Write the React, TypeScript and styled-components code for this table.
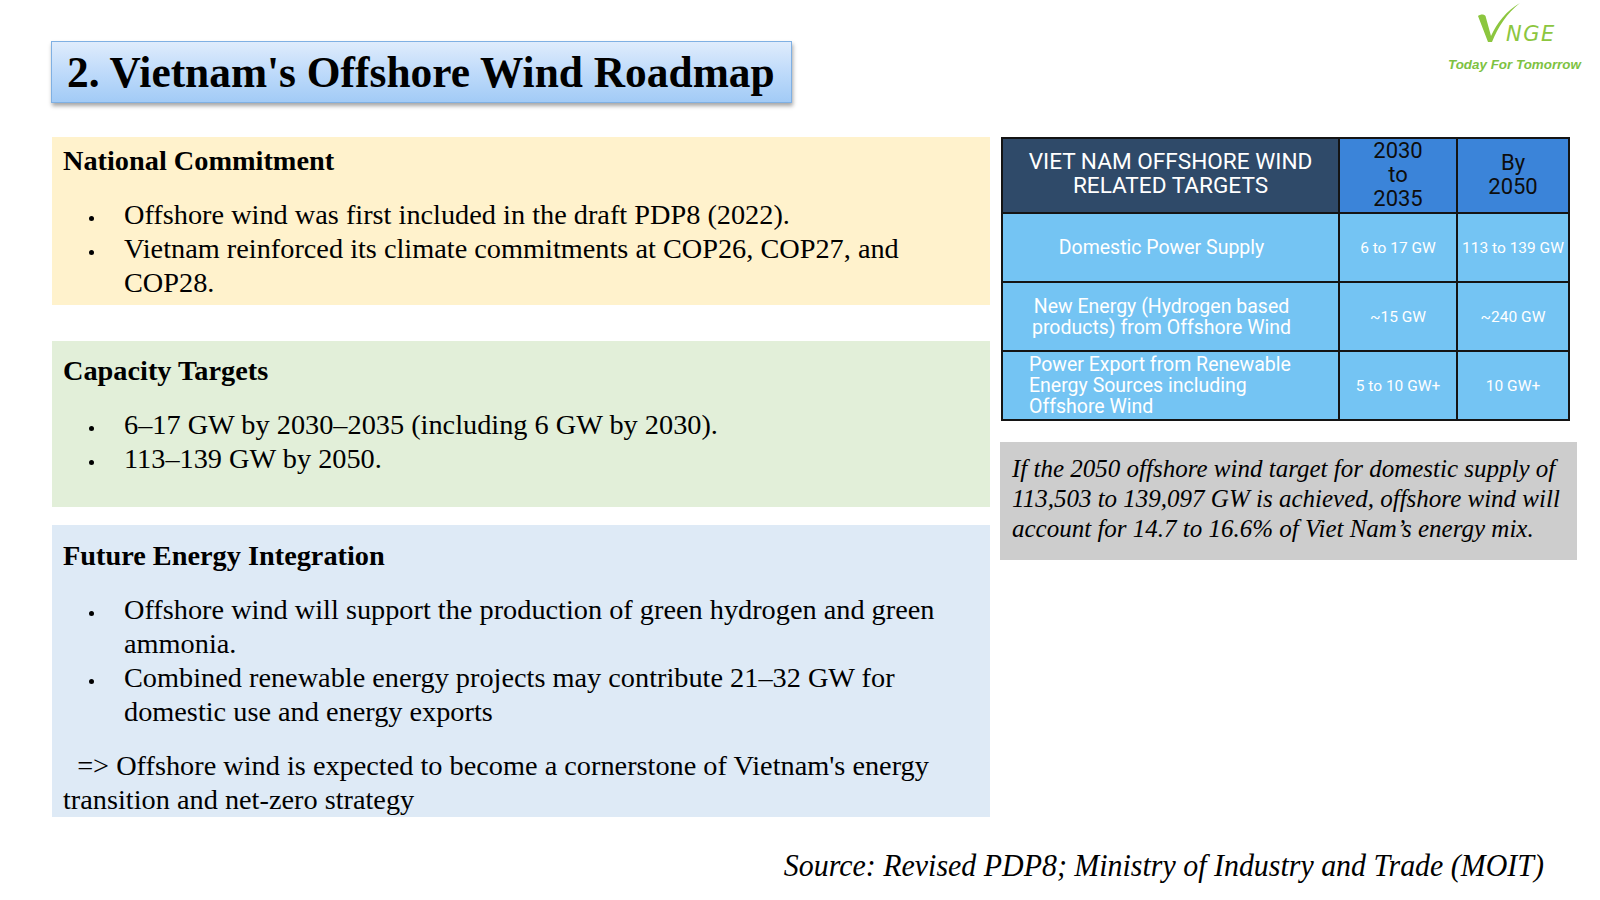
import React from "react";
import styled, {createGlobalStyle} from "styled-components";

const GlobalStyle = createGlobalStyle`
  html, body {
    margin: 0;
    padding: 0;
    background: #ffffff;
  }
  body {
    font-family: "Liberation Serif", "Times New Roman", serif;
    color: #000;
  }
`

type Section = {
	title: string
	bg: string
	height: number
	headPad: number
	gapTop: number
	items: string[]
	note?: string
}

const sections: Section[] = [
	{
		title: "National Commitment",
		bg: "#fff2cc",
		height: 168,
		headPad: 7,
		gapTop: 0,
		items: [
			"Offshore wind was first included in the draft PDP8 (2022).",
			"Vietnam reinforced its climate commitments at COP26, COP27, and COP28.",
		],
	},
	{
		title: "Capacity Targets",
		bg: "#e2efd9",
		height: 166,
		headPad: 13,
		gapTop: 36,
		items: [
			"6–17 GW by 2030–2035 (including 6 GW by 2030).",
			"113–139 GW by 2050.",
		],
	},
	{
		title: "Future Energy Integration",
		bg: "#deeaf6",
		height: 292,
		headPad: 14,
		gapTop: 18,
		items: [
			"Offshore wind will support the production of green hydrogen and green ammonia.",
			"Combined renewable energy projects may contribute 21–32 GW for domestic use and energy exports",
		],
		note: "\u00a0\u00a0=> Offshore wind is expected to become a cornerstone of Vietnam's energy transition and net-zero strategy",
	},
]

const rows = [
	{label: "Domestic Power Supply", a: "6 to 17 GW", b: "113 to 139 GW", align: "center"},
	{label: "New Energy (Hydrogen based products) from Offshore Wind", a: "~15 GW", b: "~240 GW", align: "center"},
	{label: "Power Export from Renewable Energy Sources including Offshore Wind", a: "5 to 10 GW+", b: "10 GW+", align: "left"},
]

const Logo = () => (
	<LogoBox>
		<LogoMark>
			<svg width="46" height="42" viewBox="0 0 46 42">
				<path d="M2 14 C4.5 12 8 12 9.5 14 L15 34 C21 21 30 9 44 1 C31 11 22 25 16 40 L12 40 Z"
				      fill="#8cc63f"/>
			</svg>
			<LogoLetters>NGE</LogoLetters>
		</LogoMark>
		<Tagline>Today For Tomorrow</Tagline>
	</LogoBox>
)

export default function App() {
	return (
		<>
			<GlobalStyle/>
			<Page>
				<Header>
					<TitleBox>2. Vietnam's Offshore Wind Roadmap</TitleBox>
					<Logo/>
				</Header>
				<Content>
					<LeftColumn>
						{sections.map((s, i) => (
							<Card key={i} bg={s.bg} h={s.height} headPad={s.headPad} gapTop={s.gapTop}>
								<CardTitle>{s.title}</CardTitle>
								<BulletList>
									{s.items.map((t, j) => <Bullet key={j}>{t}</Bullet>)}
								</BulletList>
								{s.note && <Note>{s.note}</Note>}
							</Card>
						))}
					</LeftColumn>
					<RightColumn>
						<Table>
							<colgroup>
								<col style={{width: 337}}/>
								<col style={{width: 118}}/>
								<col style={{width: 112}}/>
							</colgroup>
							<thead>
							<tr>
								<HeadMain>VIET NAM OFFSHORE WIND<br/>RELATED TARGETS</HeadMain>
								<HeadYear>2030<br/>to<br/>2035</HeadYear>
								<HeadYear>By<br/>2050</HeadYear>
							</tr>
							</thead>
							<tbody>
							{rows.map((r, i) => (
								<tr key={i}>
									<LabelCell align={r.align}><LabelText>{r.label}</LabelText></LabelCell>
									<ValueCell>{r.a}</ValueCell>
									<ValueCell>{r.b}</ValueCell>
								</tr>
							))}
							</tbody>
						</Table>
						<NoteBox>
							If the 2050 offshore wind target for domestic supply of 113,503 to 139,097 GW is achieved,
							offshore wind will account for 14.7 to 16.6% of Viet Nam’s energy mix.
						</NoteBox>
					</RightColumn>
				</Content>
				<Footer>
					<Source>Source: Revised PDP8; Ministry of Industry and Trade (MOIT)</Source>
				</Footer>
			</Page>
		</>
	)
}

const Page = styled.div`
  width: 1600px;
  height: 900px;
  box-sizing: border-box;
  padding: 0 23px 0 52px;
  display: flex;
  flex-direction: column;
  overflow: hidden;
`
const Header = styled.div`
  display: flex;
  justify-content: space-between;
  align-items: flex-start;
  height: 137px;
`
const TitleBox = styled.div`
  margin-top: 41px;
  margin-left: -1px;
  width: 741px;
  height: 62px;
  box-sizing: border-box;
  border: 1px solid #7fb0e3;
  background: linear-gradient(to bottom, #dfecfc 0%, #bcd9fa 55%, #a2cbf6 100%);
  box-shadow: 1px 3px 4px rgba(0, 0, 0, 0.35);
  font-family: "Liberation Serif", "Times New Roman", serif;
  font-weight: 700;
  font-size: 43.4px;
  line-height: 60px;
  padding-left: 15px;
  white-space: nowrap;
`
const LogoBox = styled.div`
  margin-top: 2px;
  margin-right: -5px;
  display: flex;
  flex-direction: column;
  width: 134px;
`
const LogoMark = styled.div`
  display: flex;
  align-items: flex-end;
  padding-left: 28px;
  height: 42px;
`
const LogoLetters = styled.span`
  font-family: "DejaVu Sans", sans-serif;
  font-style: italic;
  font-weight: 200;
  font-size: 21px;
  line-height: 18px;
  color: #8cc63f;
  margin-left: -30px;
  margin-bottom: 1px;
  letter-spacing: 1.5px;
  padding-left: 14px;
`
const Tagline = styled.div`
  margin-top: 13px;
  font-family: "Liberation Sans", Arial, sans-serif;
  font-style: italic;
  font-weight: 700;
  font-size: 13.4px;
  line-height: 16px;
  color: #7dc242;
  white-space: nowrap;
`
const Content = styled.div`
  display: grid;
  grid-template-columns: 938px 577px;
  column-gap: 10px;
  align-items: start;
`
const LeftColumn = styled.div`
  display: flex;
  flex-direction: column;
`
const Card = styled.div<{ bg: string, h: number, headPad: number, gapTop: number }>`
  background: ${p => p.bg};
  height: ${p => p.h}px;
  margin-top: ${p => p.gapTop}px;
  box-sizing: border-box;
  padding: ${p => p.headPad}px 40px 0 11px;
  font-size: 28.3px;
  line-height: 34px;
`
const CardTitle = styled.div`
  font-weight: 700;
  margin-bottom: 20px;
`
const BulletList = styled.ul`
  list-style: none;
  margin: 0;
  padding: 0 0 0 61px;
`
const Bullet = styled.li`
  position: relative;

  &::before {
    content: "";
    position: absolute;
    left: -35px;
    top: 18px;
    width: 5px;
    height: 5px;
    border-radius: 50%;
    background: #000;
  }
`
const Note = styled.div`
  margin-top: 20px;
`
const RightColumn = styled.div`
  display: flex;
  flex-direction: column;
  gap: 21px;
`
const Table = styled.table`
  width: 567px;
  margin-left: 1px;
  border-collapse: collapse;
  table-layout: fixed;
  font-family: Roboto, "Liberation Sans", Arial, sans-serif;

  td, th {
    border: 2px solid #141414;
    padding: 0;
  }
`
const HeadMain = styled.th`
  background: #2f4a69;
  color: #fff;
  height: 70px;
  font-size: 22.6px;
  font-weight: 400;
  line-height: 24px;
  text-align: center;
  padding-bottom: 3px !important;
`
const HeadYear = styled.th`
  background: #3b84d9;
  color: #0d0d0d;
  font-size: 22px;
  font-weight: 400;
  line-height: 24px;
  text-align: center;
  padding-bottom: 1px !important;
`
const LabelCell = styled.td<{ align: string }>`
  background: #74c4f3;
  color: #fff;
  height: 67px;
  font-size: 19.5px;
  line-height: 21px;
  text-align: ${p => p.align};
  padding: ${p => p.align === "left" ? "0 14px 0 26px" : "0 36px 0 18px"} !important;
  vertical-align: middle;
`
const LabelText = styled.div`
  max-height: 64px;
  overflow: hidden;
`
const ValueCell = styled.td`
  background: #74c4f3;
  color: #fff;
  font-size: 15.5px;
  text-align: center;
  white-space: nowrap;
  overflow: hidden;
`
const NoteBox = styled.div`
  background: #cdcdcd;
  height: 118px;
  box-sizing: border-box;
  padding: 12px 14px 0 12px;
  font-family: "Liberation Serif", "Times New Roman", serif;
  font-style: italic;
  font-size: 25px;
  line-height: 30px;
`
const Footer = styled.div`
  display: flex;
  justify-content: flex-end;
  margin-top: 29px;
  padding-right: 33px;
`
const Source = styled.div`
  font-style: italic;
  font-size: 32px;
  line-height: 38px;
  transform: scaleX(0.935);
  transform-origin: right center;
`
